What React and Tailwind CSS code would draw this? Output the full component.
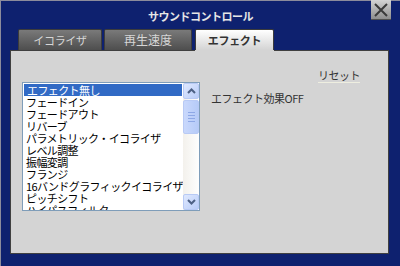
import React from "react"

const items = [
    "エフェクト無し",
    "フェードイン",
    "フェードアウト",
    "リバーブ",
    "パラメトリック・イコライザ",
    "レベル調整",
    "振幅変調",
    "フランジ",
    "16バンドグラフィックイコライザ",
    "ピッチシフト",
    "ハイパスフィルタ",
]

const font = { fontFamily: '"Noto Sans CJK JP", "Noto Sans", sans-serif' }

const Chevron = ({ up }) => (
    <svg width="9" height="6" viewBox="0 0 9 6">
        <path d={up ? "M1 5 L4.5 1.5 L8 5" : "M1 1 L4.5 4.5 L8 1"} stroke="#4d6185" strokeWidth="2" fill="none" />
    </svg>
)

const ScrollBtn = ({ up }) => (
    <div className="w-[16px] h-[16px] rounded-[2px] border border-[#b8caf5] bg-gradient-to-br from-[#dfe8fe] to-[#b9cdf8] flex items-center justify-center">
        <Chevron up={up} />
    </div>
)

export default function App() {
    return (
        <div style={font} className="w-[400px] h-[266px] bg-[#0e216f] border-t border-l border-[#8c8c9c] flex flex-col">
            <div className="relative h-[28px] flex items-center justify-center">
                <span className="text-[11px] tracking-[-0.5px] font-bold text-[#e6e6e6] leading-none mt-[3px]">サウンドコントロール</span>
                <div className="absolute top-[-1px] right-[9px] w-[20px] h-[20px] bg-gradient-to-b from-[#d4d4d4] to-[#8e8e8e] border-b border-[#505050] flex items-center justify-center">
                    <svg width="14" height="14" viewBox="0 0 14 14">
                        <path d="M1 1 L13 13 M13 1 L1 13" stroke="#3a3a3a" strokeWidth="2" />
                    </svg>
                </div>
            </div>
            <div className="flex h-[21px] pl-[17px] items-end">
                <div className="w-[84px] h-[21px] rounded-t-[2px] bg-gradient-to-b from-[#7a7a7a] to-[#4e4e4e] border-t border-x border-[#3c3c3c] text-[11px] tracking-[-0.3px] text-[#d6d6d6] flex items-center justify-center">イコライザ</div>
                <div className="ml-[2px] w-[88px] h-[21px] rounded-t-[2px] bg-gradient-to-b from-[#7a7a7a] to-[#4e4e4e] border-t border-x border-[#3c3c3c] text-[12px] text-[#d6d6d6] flex items-center justify-center">再生速度</div>
                <div className="ml-[3px] w-[79px] h-[21px] rounded-t-[2px] bg-gradient-to-b from-[#ffffff] to-[#d4d4d4] border-t border-x border-[#3c3c3c] text-[11px] tracking-[-0.3px] font-bold text-[#333] flex items-center justify-center">エフェクト</div>
            </div>
            <div className="ml-[9px] mr-[11px] h-[204px] bg-[#d4d4d4] border-l border-b border-r border-[#404040] relative flex pt-[32px] pl-[11px]">
                <div className="absolute top-0 left-0 w-[184px] h-px bg-[#404040]" />
                <div className="absolute top-0 left-[263px] right-0 h-px bg-[#404040]" />
                <div className="w-[178px] h-[129px] border border-[#7f9db9] bg-white flex overflow-hidden">
                    <div className="flex-1 overflow-hidden pt-px">
                        {items.map((t, i) => (
                            <div key={t} className={`h-[12px] leading-[12px] pl-[3px] text-[11px] tracking-[-0.6px] whitespace-nowrap ${i === 0 ? "bg-[#316ac5] text-white mx-px pl-[2px]" : "text-black"}`}>{t}</div>
                        ))}
                    </div>
                    <div className="w-[16px] bg-gradient-to-r from-[#f3f1ec] to-[#fefefe] flex flex-col justify-between">
                        <ScrollBtn up />
                        <div className="flex-1 pt-px">
                            <div className="h-[34px] rounded-[2px] border border-[#b8caf5] bg-gradient-to-r from-[#c9d8fc] to-[#b6cbf8] flex flex-col items-center justify-center gap-[2px]">
                                <div className="w-[7px] h-px bg-[#8ea8e6]" />
                                <div className="w-[7px] h-px bg-[#8ea8e6]" />
                                <div className="w-[7px] h-px bg-[#8ea8e6]" />
                                <div className="w-[7px] h-px bg-[#8ea8e6]" />
                            </div>
                        </div>
                        <ScrollBtn />
                    </div>
                </div>
                <div className="flex-1 flex flex-col">
                    <div className="self-end mr-[28px] -mt-[13px] text-[11px] tracking-[-0.5px] text-[#333] leading-[13px] border-b border-[#eeeee0]">リセット</div>
                    <div className="ml-[11px] mt-[9px] text-[11px] tracking-[-0.5px] text-[#333] leading-[12px]">エフェクト効果OFF</div>
                </div>
            </div>
        </div>
    )
}
